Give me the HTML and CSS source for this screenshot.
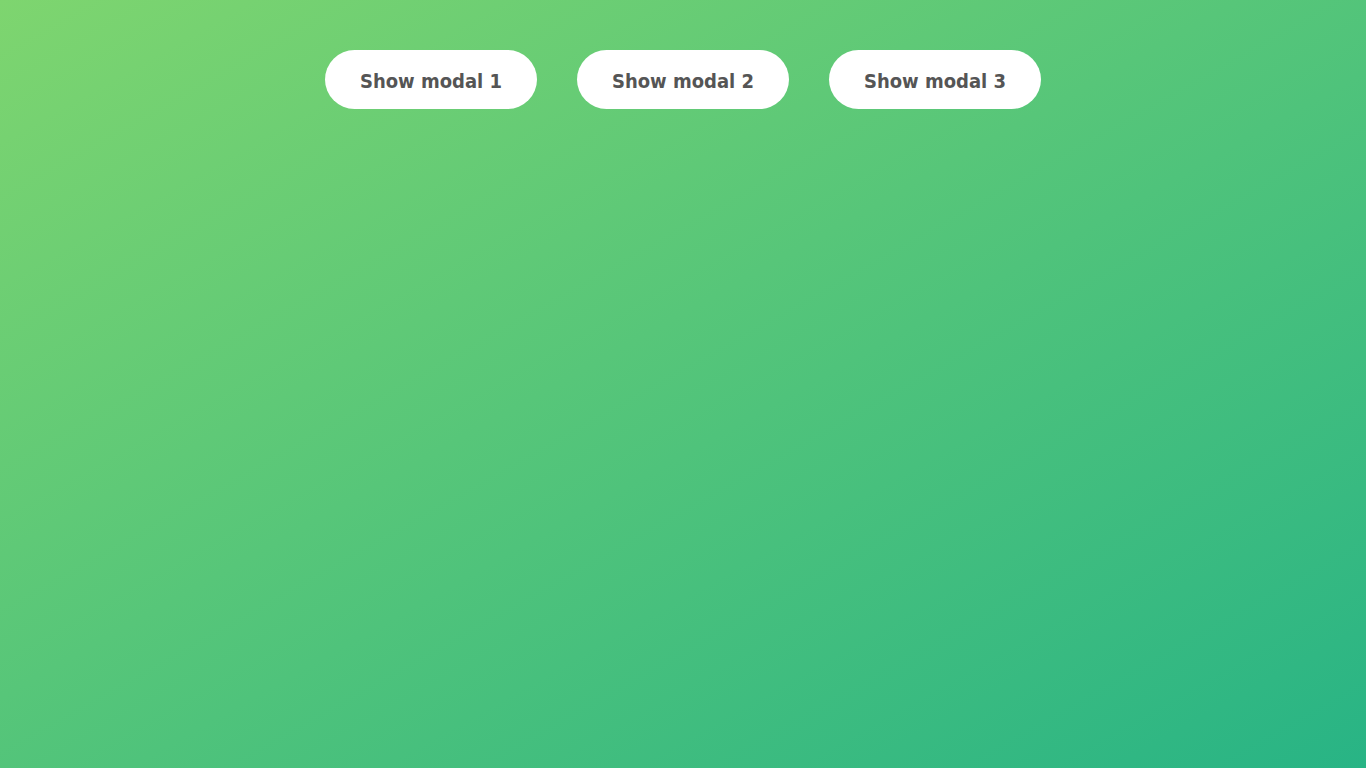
FILE: index.html
```html
<!DOCTYPE html>
<html lang="en">
<head>
<meta charset="utf-8">
<title>Modals</title>
<link rel="stylesheet" href="styles.css">
</head>
<body>
<div class="bar">
  <button class="btn">Show modal 1</button>
  <button class="btn">Show modal 2</button>
  <button class="btn">Show modal 3</button>
</div>
</body>
</html>
```
FILE: styles.css
```css
html, body {
  margin: 0;
  height: 100%;
}
body {
  background: linear-gradient(to bottom right, #7ed56f, #28b485);
  font-family: "DejaVu Sans Condensed", "DejaVu Sans", sans-serif;
}
.bar {
  display: flex;
  justify-content: center;
  gap: 40px;
  padding-top: 50px;
}
.btn {
  height: 59px;
  width: 212px;
  padding: 2px 0 0;
  border: none;
  border-radius: 100px;
  background: #fff;
  color: #555;
  font-family: inherit;
  font-weight: bold;
  font-size: 20px;
  cursor: pointer;
}
```
